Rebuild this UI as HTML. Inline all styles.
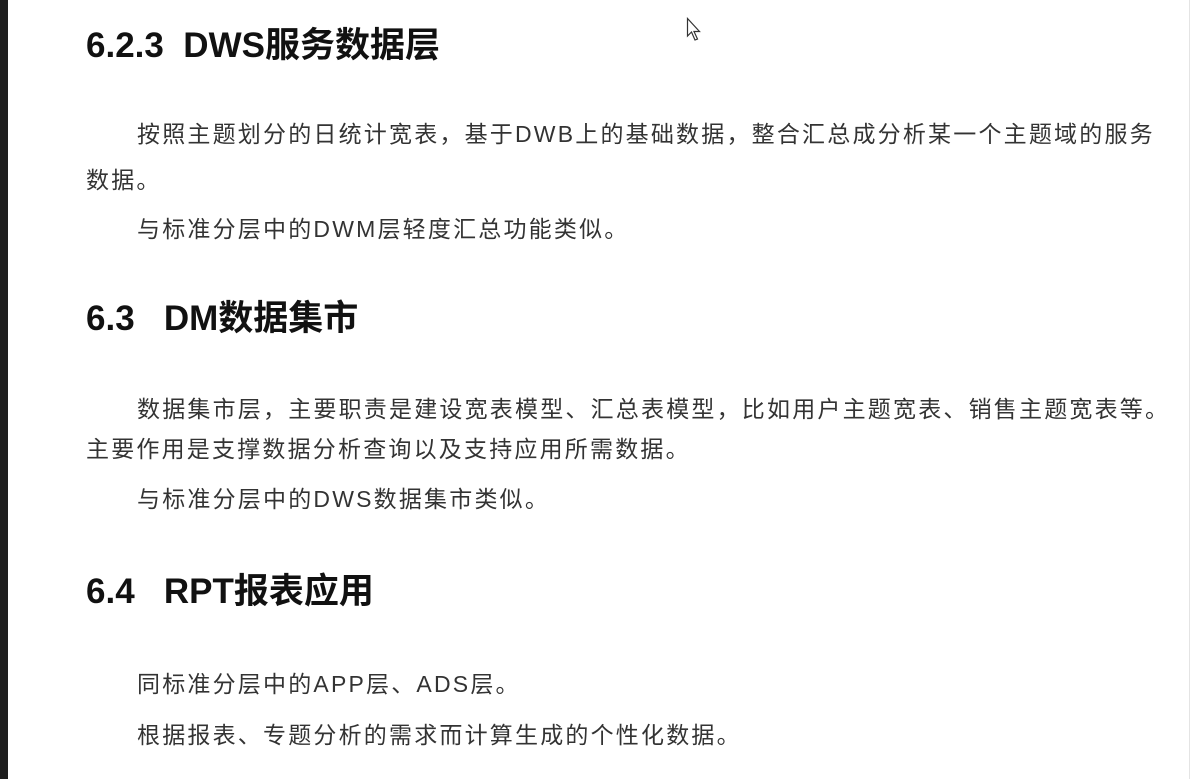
<!DOCTYPE html>
<html><head><meta charset="utf-8"><style>
html,body{margin:0;padding:0}
body{width:1192px;height:779px;background:#fff;position:relative;overflow:hidden;font-family:"Liberation Sans","Noto Sans CJK SC",sans-serif}
.bar{position:absolute;left:0;top:0;width:8px;height:779px;background:#1f1f1f}
.rl{position:absolute;left:1189px;top:0;width:1px;height:779px;background:#e4e4e4}
.h{position:absolute;left:86px;font-size:35px;font-weight:bold;color:#111;white-space:nowrap;line-height:1}
.p{position:absolute;font-size:23px;letter-spacing:2.2px;color:#333;white-space:nowrap;line-height:1}
</style></head><body>
<div class="bar"></div><div class="rl"></div>
<div class="h" style="top:28px">6.2.3&nbsp; DWS服务数据层</div>
<div class="p" style="left:137px;top:123px">按照主题划分的日统计宽表，基于DWB上的基础数据，整合汇总成分析某一个主题域的服务</div>
<div class="p" style="left:86px;top:169px">数据。</div>
<div class="p" style="left:137px;top:218px">与标准分层中的DWM层轻度汇总功能类似。</div>
<div class="h" style="top:301px">6.3&nbsp;&nbsp; DM数据集市</div>
<div class="p" style="left:137px;top:398px">数据集市层，主要职责是建设宽表模型、汇总表模型，比如用户主题宽表、销售主题宽表等。</div>
<div class="p" style="left:86px;top:438px">主要作用是支撑数据分析查询以及支持应用所需数据。</div>
<div class="p" style="left:137px;top:488px">与标准分层中的DWS数据集市类似。</div>
<div class="h" style="top:574px">6.4&nbsp;&nbsp; RPT报表应用</div>
<div class="p" style="left:137px;top:673px">同标准分层中的APP层、ADS层。</div>
<div class="p" style="left:137px;top:724px">根据报表、专题分析的需求而计算生成的个性化数据。</div>
<svg style="position:absolute;left:686px;top:17px" width="18" height="26" viewBox="0 0 18 26"><path d="M1.5 1.5 L1.5 19 L5.5 15 L9 23 L11.5 22 L8 14.5 L13.5 14.5 Z" fill="#fff" stroke="#333" stroke-width="1.2"/></svg>
</body></html>
